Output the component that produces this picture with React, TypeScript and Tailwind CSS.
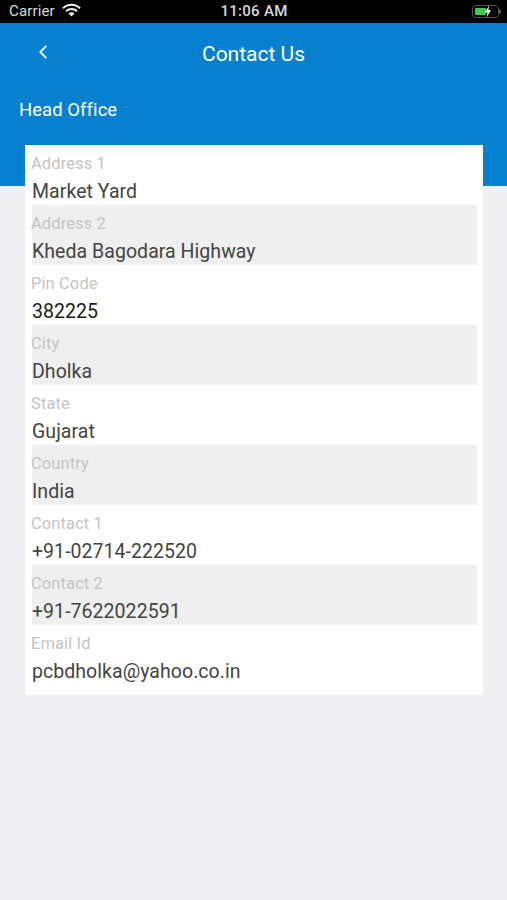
import React from "react";
import { ChevronLeft } from "lucide-react";

const rows = [
  { label: "Address 1", value: "Market Yard" },
  { label: "Address 2", value: "Kheda Bagodara Highway" },
  { label: "Pin Code", value: "382225", dark: true },
  { label: "City", value: "Dholka" },
  { label: "State", value: "Gujarat" },
  { label: "Country", value: "India" },
  { label: "Contact 1", value: "+91-02714-222520" },
  { label: "Contact 2", value: "+91-7622022591" },
  { label: "Email Id", value: "pcbdholka@yahoo.co.in" },
];

function StatusBar() {
  return (
    <div className="h-[23px] bg-black flex items-center justify-between pl-[9px] pr-[6px] text-[#d8d8d8]">
      <div className="flex items-center gap-[7px] w-[120px]">
        <span className="text-[15px] leading-none tracking-[0.15px]">Carrier</span>
        <svg width="19" height="14" viewBox="0 0 19 14" className="-mt-[3px]">
          <path d="M1 5.2a12 12 0 0 1 17 0" fill="none" stroke="#eee" strokeWidth="2" />
          <path d="M4 8.2a8 8 0 0 1 11 0" fill="none" stroke="#eee" strokeWidth="2" />
          <path d="M6.6 10.6a4 4 0 0 1 5.8 0L9.5 13.6z" fill="#eee" />
        </svg>
      </div>
      <span className="text-[15px] leading-none font-medium tracking-[0.3px] -ml-[2px]">11:06 AM</span>
      <div className="w-[120px] flex justify-end items-center">
        <div className="relative w-[27px] h-[13px] rounded-[4px] border border-[#555] p-[2px]">
          <div className="w-[11px] h-full bg-[#3ccb4f] rounded-[1px]" />
          <svg width="8" height="13" viewBox="0 0 8 12" className="absolute left-[11px] -top-px">
            <path d="M5 0L1 7h2.5L2.5 12 7 4.6H4.4z" fill="#fff" />
          </svg>
        </div>
        <div className="w-[2px] h-[5px] bg-[#555] rounded-r-sm" />
      </div>
    </div>
  );
}

function InfoRow({ label, value, shaded, dark }: { label: string; value: string; shaded: boolean; dark?: boolean }) {
  return (
    <div className={`h-[60px] pt-[8px] ${shaded ? "bg-[#efefef]" : ""}`}>
      <div className="text-[16.5px] leading-[21px] text-[#c4c4c4] -ml-px tracking-[0.1px]">{label}</div>
      <div className={`text-[19.5px] leading-[25px] mt-[5px] tracking-[0.05px] ${dark ? "text-[#1a1a1a]" : "text-[#444444]"}`}>{value}</div>
    </div>
  );
}

export default function App() {
  return (
    <div className="min-h-[900px] bg-[#efeff4] font-['Roboto',sans-serif]">
      <StatusBar />
      <div className="bg-[#0780cf] h-[163px] text-white">
        <div className="relative flex justify-center pt-[18px]">
          <ChevronLeft size={22} strokeWidth={2} className="absolute left-[32px] top-[18px] text-[#e8f4fc]" />
          <span className="text-[21px] leading-[27px]">Contact Us</span>
        </div>
        <div className="mt-[30px] pl-[19px] text-[18.5px] leading-[24px] tracking-[0.05px]">Head Office</div>
      </div>
      <div className="ml-[25px] mr-[24px] -mt-[41px] relative bg-white pl-[7px] pr-[6px] pb-[10px]">
        {rows.map((r, i) => (
          <InfoRow key={r.label} label={r.label} value={r.value} dark={r.dark} shaded={i % 2 === 1} />
        ))}
      </div>
    </div>
  );
}
